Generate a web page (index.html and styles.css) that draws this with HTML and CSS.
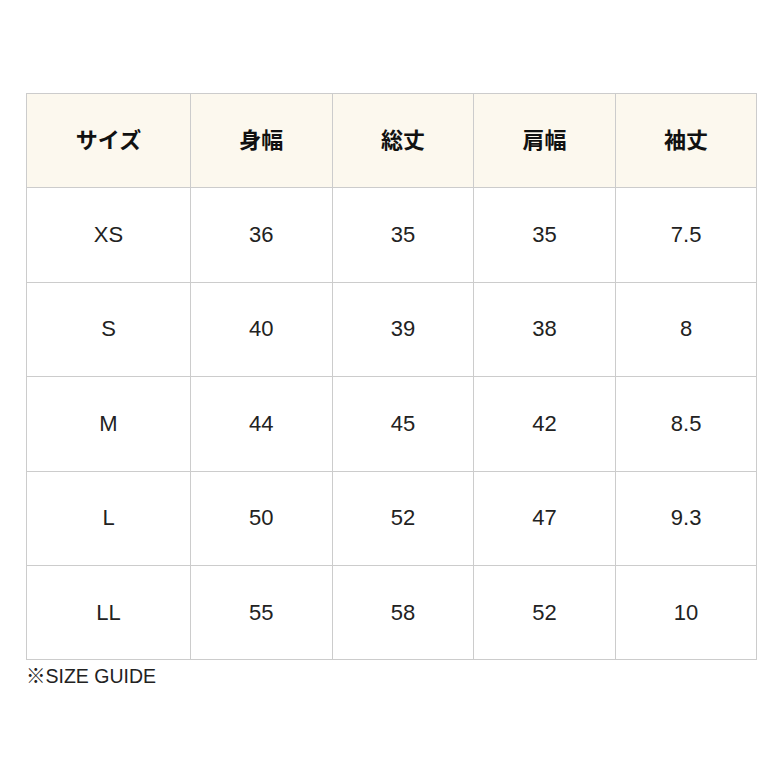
FILE: index.html
```html
<!DOCTYPE html>
<html lang="ja">
<head>
<meta charset="utf-8">
<link rel="stylesheet" href="styles.css">
</head>
<body>
<div class="wrap">
<table class="size-table">
<colgroup><col class="c1"><col class="c2"><col class="c2"><col class="c2"><col class="c2"></colgroup>
<thead>
<tr><th>サイズ</th><th>身幅</th><th>総丈</th><th>肩幅</th><th>袖丈</th></tr>
</thead>
<tbody>
<tr><td>XS</td><td>36</td><td>35</td><td>35</td><td>7.5</td></tr>
<tr><td>S</td><td>40</td><td>39</td><td>38</td><td>8</td></tr>
<tr><td>M</td><td>44</td><td>45</td><td>42</td><td>8.5</td></tr>
<tr><td>L</td><td>50</td><td>52</td><td>47</td><td>9.3</td></tr>
<tr><td>LL</td><td>55</td><td>58</td><td>52</td><td>10</td></tr>
</tbody>
</table>
<p class="note">※SIZE GUIDE</p>
</div>
</body>
</html>
```
FILE: styles.css
```css
html, body { margin: 0; padding: 0; background: #fff; }
body { font-family: "Liberation Sans", "Noto Sans CJK JP", sans-serif; color: #222; }
.wrap { padding: 93px 0 0 26px; }
.size-table { border-collapse: collapse; width: 730.5px; table-layout: fixed; }
.c1 { width: 164px; }
.c2 { width: 141.6px; }
.size-table th, .size-table td { border: 1px solid #cccccc; text-align: center; vertical-align: middle; padding: 0; }
.size-table th { height: 94.4px; padding-bottom: 5px; box-sizing: border-box; background: #fcf8ee; font-family: "Noto Sans CJK JP", sans-serif; font-weight: 700; font-size: 22px; color: #111; }
.size-table td { height: 93.4px; font-size: 22px; }
.note { margin: 0; font-size: 19.5px; color: #222; }
```
